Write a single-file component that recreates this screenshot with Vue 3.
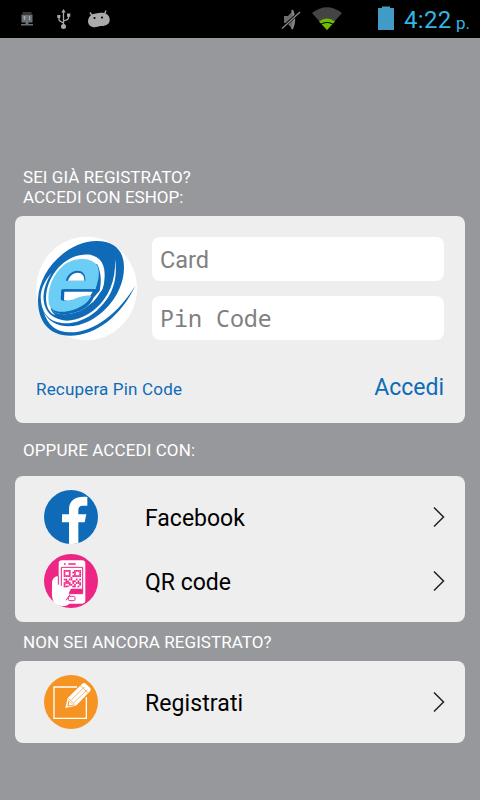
<script setup>
import { ref } from 'vue'

const card = ref('')
const pin = ref('')
// Filled modules of the QR symbol, on a 10 x 10 grid
const qr = [
  '1111001111', '1001011001', '1001001001', '1111011111', '0000100000',
  '1101100101', '0110011010', '1111010111', '1001101001', '1111011010',
]
const modules = qr.flatMap((row, y) => [...row].flatMap((c, x) => (c === '1' ? [{ x, y }] : [])))
</script>

<template>
  <div class="screen">
    <header class="status">
      <svg class="sys" viewBox="0 0 120 38">
        <path d="M22.500 12.500h9v1h-9zM21.500 14.500h11v8h-11zM25.500 22h3v2h-3zM21 24h12v1.500H21z" fill="#6b7074" />
        <path d="M24.500 20v-4m-1 1.500 1-1.500 1 1.500M29.500 16v4" stroke="#a6abaf" fill="none" />
        <path d="M63.500 26V11M59 17v2.500q0 1.500 4.500 3.500M68.500 16v2q0 1.500-5 3" stroke="#aaa" stroke-width="1.300" fill="none" />
        <path d="M61.300 12.500 63.500 9l2.200 3.500zM57.300 15h3v3h-3zM67 13.500h3.300v3.300H67z" fill="#aaa" />
        <circle cx="63.500" cy="26.500" r="2.500" fill="#aaa" />
        <path d="M90 12.500l2 3M106 10.500l-1.500 3.500" stroke="#aaa" stroke-width="1.400" />
        <path d="M88 22C88 17 91 14 96 13.500C104 11.500 109.500 14 109.700 19.500C110 24 106 26.500 100 26C96 28 89 28 88 22Z" fill="#aaa" />
        <circle cx="94.500" cy="18" r="1.100" /><circle cx="102" cy="17.500" r="1.100" />
      </svg>
      <svg class="signals" viewBox="0 0 130 38">
        <path d="M4 16h4l5-5.500q3 8.500-1 18L7 23H4z" fill="#6c6c6c" />
        <path d="M12 10q4.500 9 0 19" stroke="#888" stroke-width="2" fill="none" />
        <path d="M2 28 20 12" stroke="#000" stroke-width="3" />
        <path d="M2 28.500 20 12" stroke="#858585" stroke-width="1.400" />
        <path d="M32 13q15-11.500 30 0L47 30z" fill="#444" />
        <path d="M39 21.500q8-6 16 0L47 30z" fill="#6fbd00" />
        <path d="M41 24.200q6-3.500 12 0" stroke="#000" stroke-width="1" fill="none" />
        <path d="M98 8h4V6.500h8V8h4v22H98z" fill="#429bc4" />
      </svg>
      <span class="clock">4:22</span><span class="period">p.</span>
    </header>

    <main>
      <h2 class="label first"><span class="l1">SEI GIÀ REGISTRATO?</span><br><span class="l2">ACCEDI CON ESHOP:</span></h2>
      <section class="panel login">
        <div class="top">
          <svg class="logo" viewBox="30 30 309 315">
            <ellipse cx="185" cy="187.500" rx="151" ry="155" fill="#fff" />
            <path fill="#0f6bb7" d="M331 179C290 266 215 329 135 329C70 329 38 285 39 220C42 130 130 45 215 45C270 45 297 75 297 125C297 212 215 300 130 301C95 300 68 285 55 254C68 300 95 318 135 319C212 318 282 258 331 179Z" />
            <path fill="#fff" d="M270 100C280 165 260 214 215 254C180 284 140 295 110 291C70 286 47 257 47 212C48 187 60 163 80 140C60 173 54 198 56 223C60 260 85 282 125 284C160 283 190 267 213 247C250 214 273 165 270 100Z" />
            <path fill="#fff" d="M239 145C239 96 204 79 164 88C108 99 64 157 63 218C64 244 73 261 91 267C110 269 130 268 150 264C210 245 239 205 239 145Z" />
            <path fill="#0f6bb7" d="M78 251C92 282 150 287 190 255C215 235 228 214 234 190L207 216C199 232 184 246 165 255C130 268 98 269 78 251Z" />
            <path fill="#fff" d="M176 248Q195 235 204 216L230 180L238 168Q230 200 205 227Z" />
            <path fill="#0f6bb7" d="M78 251C98 269 130 268 165 255C184 246 199 232 205 216L224 194C229 170 230 140 216 113L75 220Z" />
            <path fill="#6dcef5" d="M219 164L212 190H110L108 222C123 229 140 224 155 217C170 209 182 210 199 210C188 232 168 244 143 252C108 263 76 258 71 230C66 185 85 143 117 117C145 95 193 92 214 115C223 127 223 147 219 164Z" />
            <path fill="#0f6bb7" d="M122 164C127 147 140 134 157 134C172 134 182 143 181 164Z" />
            <path fill="#fff" d="M129 164C134 148 145 140 158 140C171 140 178 149 178 164Z" />
            <path fill="#0f6bb7" d="M109 190H213L219 166L225 160L216 197H118V224L107 220Z" />
            <path fill="#fff" d="M118 197H203L196 209C180 209 169 210 155 217C141 224 130 225 117 223Z" />
          </svg>
          <div class="fields">
            <input v-model="card" placeholder="Card" aria-label="Card">
            <input v-model="pin" class="mono" placeholder="Pin Code" aria-label="Pin Code">
          </div>
        </div>
        <div class="actions"><a class="recover">Recupera Pin Code</a><a class="enter">Accedi</a></div>
      </section>

      <h2 class="label second"><span class="l3">OPPURE ACCEDI CON:</span></h2>
      <section class="panel options">
        <div class="row">
          <svg class="badge" viewBox="0 0 162 162">
            <circle cx="81" cy="81" r="81" fill="#0f6bb7" />
            <path d="M75 161V97H54V73H75V59C75 31 95 18 130 21V47H116C107 47 103 52 103 60V73H127L122 97H103V159Q89 163 75 161Z" fill="#fff" />
          </svg>
          <span class="name facebook">Facebook</span>
          <svg class="chevron" viewBox="0 0 14 22"><path d="M2 1.500 11.500 11 2 20.500" /></svg>
        </div>
        <div class="row">
          <svg class="badge" viewBox="0 0 162 162">
            <circle cx="81" cy="81" r="81" fill="#ed2585" />
            <path fill="#fff" d="M54 19H114Q124 19 124 29V139Q124 149 114 149H76C66 160 48 158 31 146C20 130 25 110 24 88C24 75 32 66 44 66V29Q44 19 54 19Z" />
            <path fill="none" stroke="#ed2585" stroke-width="3" d="M52 96V40H116V119H80L66 139M43 66V92" />
            <path fill="#ed2585" d="M60 28h5v4h-5zM73 28h22v4H73zM80 104H116V119H74Z" />
            <rect x="73" y="127" width="20" height="13" rx="4" fill="none" stroke="#ed2585" stroke-width="3" />
            <g fill="#ed2585" transform="translate(59 48) scale(5.200)">
              <rect v-for="m in modules" :key="m.x + '-' + m.y" :x="m.x" :y="m.y" width="1" height="1" />
            </g>
            <path fill="#fff" d="M50 92L60 110L77 95Q85 98 81 104L62 128Z" />
          </svg>
          <span class="name qrcode">QR code</span>
          <svg class="chevron" viewBox="0 0 14 22"><path d="M2 1.500 11.500 11 2 20.500" /></svg>
        </div>
      </section>

      <h2 class="label third"><span class="l4">NON SEI ANCORA REGISTRATO?</span></h2>
      <section class="panel signup">
        <div class="row">
          <svg class="badge" viewBox="0 0 162 162">
            <circle cx="81" cy="81" r="81" fill="#f59422" />
            <path d="M99 36H30V130H127V67" fill="none" stroke="#fff" stroke-width="4" />
            <path d="M64 99L71 69L114 27Q120 21 126 27L138 38Q143 43 138 49L96 92Z" fill="#fff" />
            <path d="M73 70 95 91M82 75 121 36M90 83 130 44M108 31 134 55" fill="none" stroke="#f59422" stroke-width="2" />
            <path d="M74 76 91 92 70 94Z" fill="#f59422" />
            <path d="M76 79 88 91 74 91Z" fill="#fff" />
          </svg>
          <span class="name register">Registrati</span>
          <svg class="chevron" viewBox="0 0 14 22"><path d="M2 1.500 11.500 11 2 20.500" /></svg>
        </div>
      </section>
    </main>
  </div>
</template>

<style>
body { margin: 0; }
</style>
<style scoped>
.screen { width: 480px; height: 800px; background: #97989c; font-family: Roboto, sans-serif; overflow: hidden; }
.status { height: 38px; background: #000; display: flex; align-items: center; color: #33b5e5; white-space: nowrap; }
.sys { width: 120px; height: 38px; margin-right: 160px; flex: none; }
.signals { width: 130px; height: 38px; flex: none; margin-right: -6px; }
.clock { font-size: 24px; line-height: 38px; padding-top: 2px; width: 52px; letter-spacing: .3px; }
.period { font-size: 17px; line-height: 38px; padding-top: 7px; }
main { padding: 0 15px; }
.label { margin: 0; padding-left: 8px; color: #fff; font-size: 17px; line-height: 20px; font-weight: 400; white-space: nowrap; }
.l1, .l4 { letter-spacing: .05px; }
.l3 { letter-spacing: .1px; }
.first { padding-top: 129px; height: 49px; }
.second { padding-top: 17px; height: 36px; }
.third { padding-top: 10px; height: 29px; }
.panel { background: #eee; border-radius: 8px; box-sizing: border-box; }
.login { height: 207px; padding: 20px 21px 0 20px; }
.top { display: flex; gap: 14px; }
.logo { width: 103px; height: 105px; flex: none; }
.fields { flex: 1; display: flex; flex-direction: column; gap: 15px; padding-top: 1px; }
input { width: 100%; height: 44px; box-sizing: border-box; border: 0; border-radius: 8px; background: #fff; padding: 2px 8px 0; font: 23.500px Roboto, sans-serif; outline: 0; }
input::placeholder { color: #808080; opacity: 1; }
input.mono { font-family: "Noto Sans Mono", "DejaVu Sans Mono", monospace; font-size: 23.300px; padding-top: 0; }
.actions { display: flex; justify-content: space-between; align-items: baseline; padding: 33px 0 0 1px; color: #0f6bb7; line-height: 28px; white-space: nowrap; }
.recover { font-size: 17px; letter-spacing: .18px; }
.enter { font-size: 23px; }
.options { height: 146px; padding: 9px 0; }
.signup { height: 82px; padding: 9px 0; }
.row { height: 64px; display: flex; align-items: center; padding: 0 19px 0 29px; }
.badge { width: 54px; height: 54px; margin-right: 47px; }
.name { font-size: 23px; line-height: 28px; padding-top: 4px; flex: 1; }
.register { letter-spacing: .1px; }
.chevron { width: 14px; height: 22px; }
.chevron path { fill: none; stroke: #222; stroke-width: 1.500; }
</style>
